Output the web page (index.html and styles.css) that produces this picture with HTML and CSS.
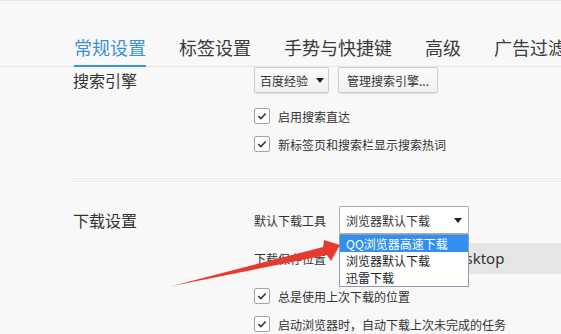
FILE: index.html
```html
<!DOCTYPE html>
<html lang="zh-CN">
<head>
  <meta charset="UTF-8">
  <title>常规设置</title>
  <link rel="stylesheet" href="styles.css">
</head>
<body>
  <div class="page">
    <nav class="tabs">
      <span class="tab active">常规设置</span>
      <span class="tab">标签设置</span>
      <span class="tab">手势与快捷键</span>
      <span class="tab">高级</span>
      <span class="tab">广告过滤</span>
    </nav>

    <!-- 搜索引擎 -->
    <section class="group">
      <h3 class="group-title">搜索引擎</h3>
      <div class="group-body">
        <div class="btn-row">
          <button class="btn btn-menu">百度经验<i class="caret"></i></button>
          <button class="btn btn-manage">管理搜索引擎...</button>
        </div>
        <label class="check">
          <span class="box"><svg viewBox="0 0 15 15"><polyline points="3.5,7.5 6.3,10.3 11.5,4.8"/></svg></span>
          启用搜索直达
        </label>
        <label class="check">
          <span class="box"><svg viewBox="0 0 15 15"><polyline points="3.5,7.5 6.3,10.3 11.5,4.8"/></svg></span>
          新标签页和搜索栏显示搜索热词
        </label>
      </div>
    </section>

    <div class="divider"></div>

    <!-- 下载设置 -->
    <section class="group download">
      <h3 class="group-title">下载设置</h3>
      <div class="group-body">
        <div class="field">
          <span class="field-label">默认下载工具</span>
          <div class="select-wrap">
            <div class="select"><span>浏览器默认下载</span><i class="caret"></i></div>
            <ul class="options">
              <li class="hover">QQ浏览器高速下载</li>
              <li>浏览器默认下载</li>
              <li>迅雷下载</li>
            </ul>
          </div>
        </div>
        <div class="field path-field">
          <span class="field-label">下载保存位置</span>
          <div class="path">C:\Users\Adm\Desktop</div>
        </div>
        <label class="check">
          <span class="box"><svg viewBox="0 0 15 15"><polyline points="3.5,7.5 6.3,10.3 11.5,4.8"/></svg></span>
          总是使用上次下载的位置
        </label>
        <label class="check">
          <span class="box"><svg viewBox="0 0 15 15"><polyline points="3.5,7.5 6.3,10.3 11.5,4.8"/></svg></span>
          启动浏览器时，自动下载上次未完成的任务
        </label>
      </div>
    </section>

    <!-- red annotation arrow -->
    <svg class="arrow" viewBox="0 0 561 334">
      <polygon points="172,286 323,247 324,240 340,245 331,261 327,255"/>
    </svg>
  </div>
</body>
</html>
```

FILE: styles.css
```css
body {
  margin: 0;
  background: #f8f8f8;
  font-family: "Noto Sans CJK SC", "Noto Sans", sans-serif;
  color: #333;
}
.page {
  position: relative;
  width: 561px;
  height: 334px;
  overflow: hidden;
  border-top: 1px solid #e8e8e8;
  box-sizing: border-box;
}
.tabs {
  display: flex;
  align-items: flex-end;
  gap: 33px;
  height: 65px;
  padding-left: 74px;
  border-bottom: 1px solid #e6e6e6;
  white-space: nowrap;
}
.tab {
  flex-shrink: 0;
  font-size: 18px;
  line-height: 24px;
  padding-bottom: 6px;
  margin-bottom: -1px;
  border-bottom: 2px solid transparent;
  color: #3a3a3a;
}
.tab.active {
  color: #3d8fd8;
  border-bottom-color: #3d8fd8;
}
.group {
  display: grid;
  grid-template-columns: 181px 1fr;
  padding-left: 73px;
}
.group-title {
  margin: 0;
  font-size: 16px;
  font-weight: normal;
  line-height: 26px;
  color: #333;
}
.download .group-title {
  line-height: 28px;
}
.group-body {
  display: flex;
  flex-direction: column;
  font-size: 12px;
}
.btn-row {
  display: flex;
  gap: 9px;
  margin-bottom: 9px;
}
.btn {
  height: 26px;
  padding: 0 10px;
  border: 1px solid #cdcdcd;
  border-radius: 2px;
  background: linear-gradient(#fbfbfb, #f1f1f1);
  box-shadow: 0 1px 0 #e2e2e2;
  font-family: inherit;
  font-size: 12px;
  color: #333;
  display: flex;
  align-items: center;
  white-space: nowrap;
}
.btn-menu {
  width: 75px;
  padding: 0 0 0 5px;
  gap: 8px;
}
.btn-manage {
  width: 100px;
  padding: 0;
  justify-content: center;
}
.caret {
  display: inline-block;
  width: 0;
  height: 0;
  border-left: 4px solid transparent;
  border-right: 4px solid transparent;
  border-top: 5px solid #222;
}
.check {
  display: flex;
  align-items: center;
  gap: 8px;
  height: 28px;
  color: #333;
}
.box {
  width: 14px;
  height: 14px;
  border: 1px solid #a3a3a3;
  border-radius: 2px;
  background: #fff;
  flex-shrink: 0;
}
.box svg {
  display: block;
  width: 14px;
  height: 14px;
}
.box polyline {
  fill: none;
  stroke: #3a3a3a;
  stroke-width: 1.8;
}
.divider {
  height: 2px;
  margin: 20px 0 24px 72px;
  border-top: 1px solid #ebebeb;
  border-bottom: 1px solid #f0f0f0;
}
.field {
  display: flex;
  align-items: center;
  height: 28px;
}
.field-label {
  width: 85px;
  flex-shrink: 0;
}
.select-wrap {
  position: relative;
  z-index: 2;
}
.select {
  box-sizing: border-box;
  width: 130px;
  height: 28px;
  border: 1px solid #a9a9a9;
  border-radius: 2px;
  background: #fff;
  display: flex;
  align-items: center;
  justify-content: space-between;
  padding: 0 6px 0 6px;
}
.options {
  position: absolute;
  top: 100%;
  left: 0;
  box-sizing: border-box;
  width: 130px;
  margin: 0;
  padding: 0;
  list-style: none;
  background: #fff;
  border: 1px solid #8d9fb3;
}
.options li {
  line-height: 17px;
  padding-left: 6px;
  font-size: 12px;
  color: #222;
}
.options li.hover {
  background: #3190ef;
  color: #fff;
}
.path-field {
  height: 31px;
  margin-top: 9px;
  margin-bottom: 8px;
}
.path {
  flex: 1;
  height: 31px;
  line-height: 31px;
  padding-left: 4px;
  background: #e5e5e5;
  font-family: "Noto Sans", sans-serif;
  font-size: 15px;
  color: #333;
  white-space: nowrap;
}
.arrow {
  position: absolute;
  left: 0;
  top: -1px;
  width: 561px;
  height: 334px;
  z-index: 5;
}
.arrow polygon {
  fill: #e8392f;
}
```
